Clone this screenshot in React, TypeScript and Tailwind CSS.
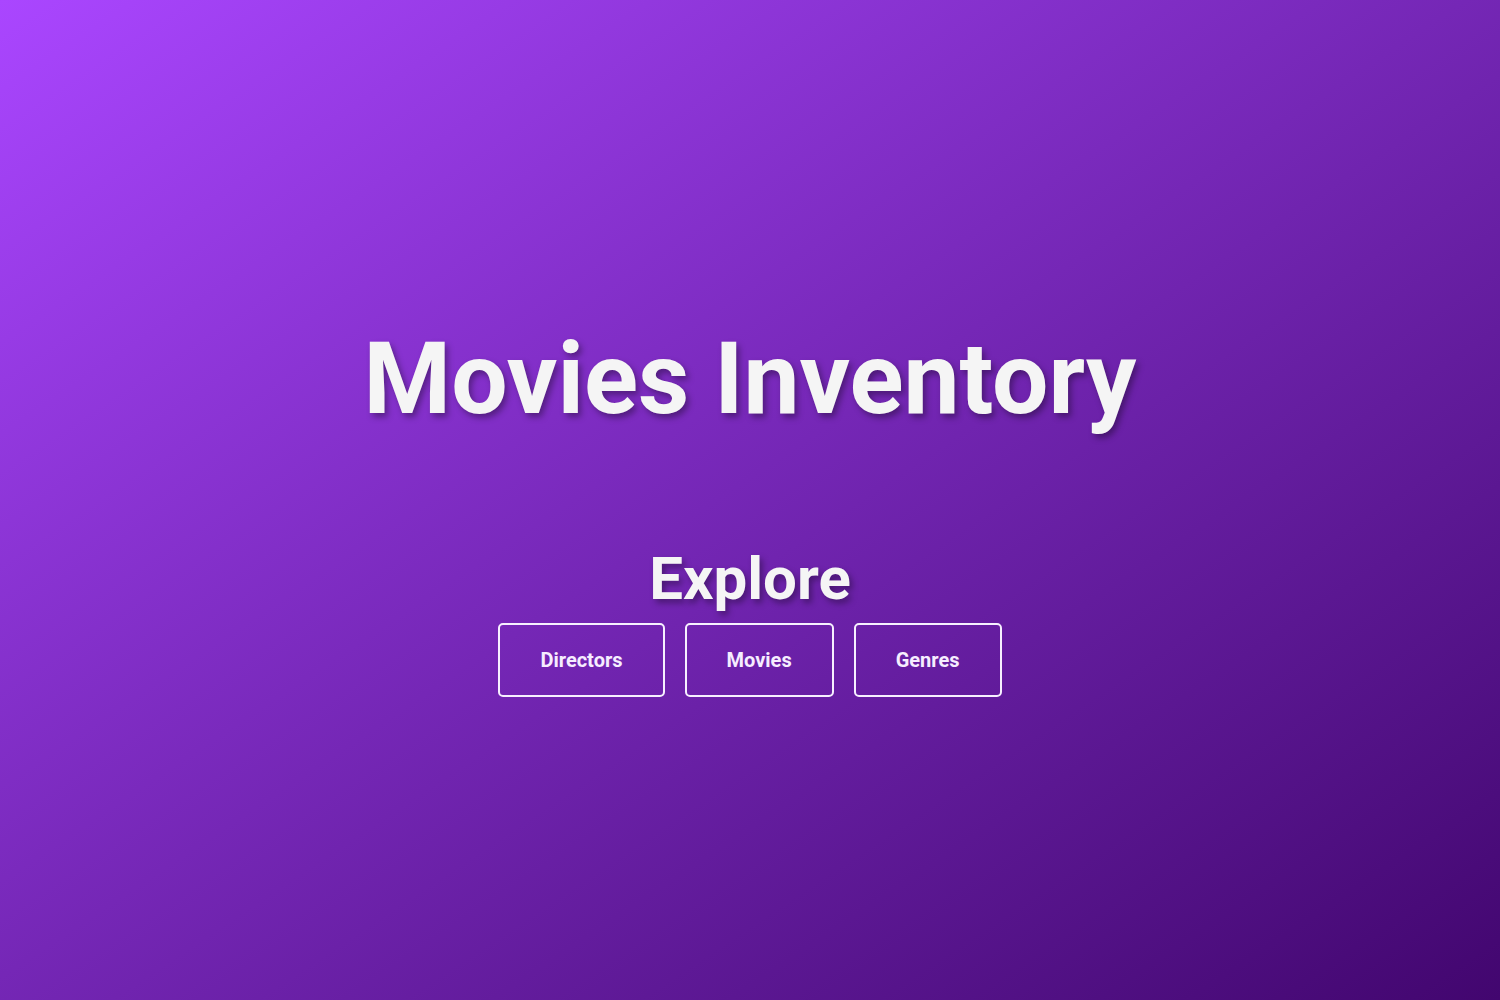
export default function App() {
  const links = ['Directors', 'Movies', 'Genres'];

  return (
    <div className="min-h-screen w-full flex flex-col items-center justify-center pt-[25px] bg-linear-to-br from-[#aa46ff] to-[#42066f] font-['Roboto','Liberation_Sans',sans-serif]">
      <h1 className="text-[100px] leading-none font-bold text-[#f5f5f5] [text-shadow:3px_4px_6px_rgba(0,0,0,0.35)]">
        Movies Inventory
      </h1>

      <h2 className="mt-[120px] text-[60px] leading-none font-bold text-[#f5f5f5] [text-shadow:3px_4px_6px_rgba(0,0,0,0.35)]">
        Explore
      </h2>

      <nav className="mt-[14px] flex gap-5">
        {links.map((label) => (
          <button
            key={label}
            className="px-10 py-5 border-2 border-[#f7f0ff] rounded-[5px] text-xl leading-[30px] font-bold text-[#f6edff]"
          >
            {label}
          </button>
        ))}
      </nav>
    </div>
  );
}
